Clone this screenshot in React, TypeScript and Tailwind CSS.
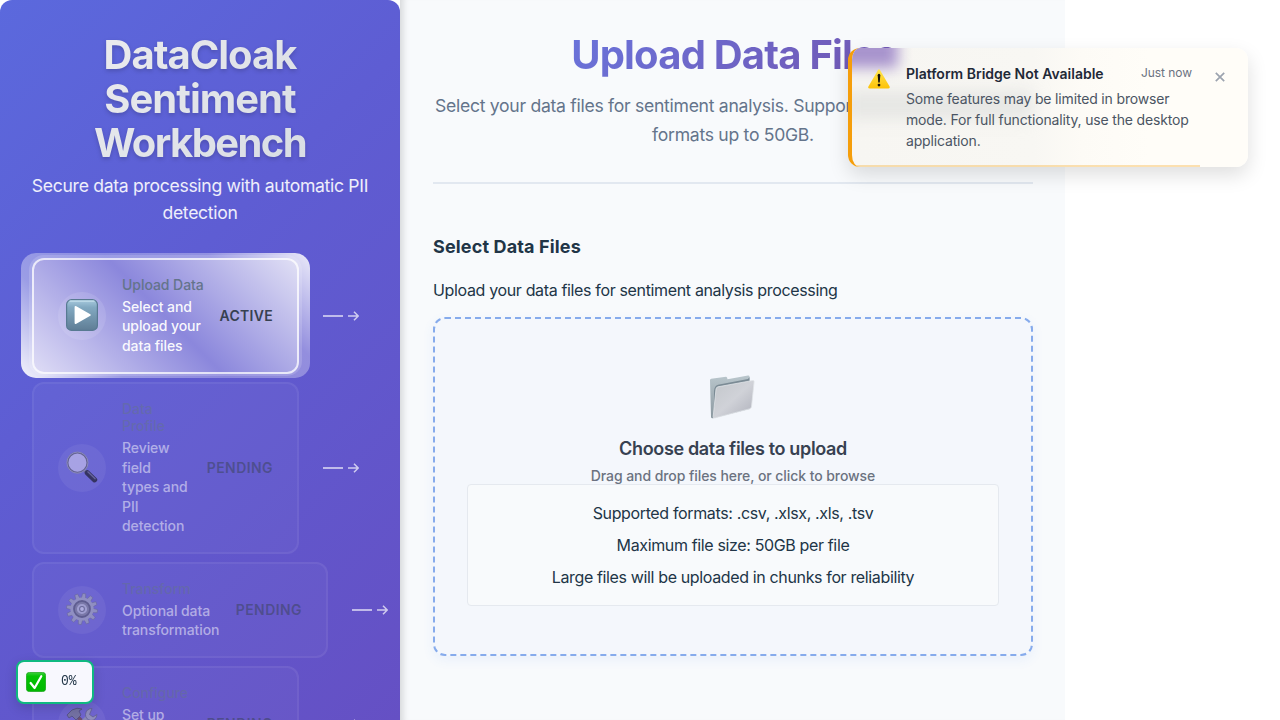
import React from 'react';

const PlayIcon = () => (
  <svg width="32" height="32" viewBox="0 0 32 32" className="block">
    <defs>
      <linearGradient id="play" x1="0" y1="0" x2="0" y2="1">
        <stop offset="0" stopColor="#a9cbdf" />
        <stop offset="0.25" stopColor="#82a9c1" />
        <stop offset="1" stopColor="#5f7d95" />
      </linearGradient>
    </defs>
    <rect x="0.6" y="0.6" width="30.8" height="30.8" rx="5" fill="url(#play)" stroke="#587a92" strokeWidth="1.2" />
    <path d="M4 2.2h24" stroke="#c4dfec" strokeWidth="1.2" strokeLinecap="round" />
    <path d="M8.6 8.2q0-1.800 1.700-1l14 8q1.300.8 0 1.600l-14 8q-1.700.8-1.700-1z" fill="#fff" />
  </svg>
);

const SearchIcon = () => (
  <svg width="32" height="32" viewBox="0 0 33 33" className="block">
    <path d="M19 20l4 4" stroke="#777" strokeWidth="3" />
    <path d="M22 22.500l7.500 7.200" stroke="#111118" strokeWidth="5.400" strokeLinecap="round" />
    <path d="M22.500 21.500l7.500 7.200" stroke="#62627a" strokeWidth="1.400" strokeLinecap="round" />
    <circle cx="11.800" cy="12" r="10.200" fill="#cfc9f0" stroke="#5d5d68" strokeWidth="1.800" />
    <circle cx="11.800" cy="12" r="10.900" fill="none" stroke="#aeb0c0" strokeWidth="0.800" />
  </svg>
);

const teeth = [0, 30, 60, 90, 120, 150, 180, 210, 240, 270, 300, 330];

const GearIcon = () => (
  <svg width="32" height="32" viewBox="0 0 32 32" className="block">
    {teeth.map((a) => (
      <path key={a} d="M13.800 5.500l.7-5h3l.7 5z" fill="#a6a9b8" stroke="#62646f" strokeWidth="0.500" transform={`rotate(${a + 8} 16 16)`} />
    ))}
    <circle cx="16" cy="16" r="11.600" fill="#a8abba" />
    <circle cx="16" cy="16" r="8" fill="#83858f" stroke="#555766" strokeWidth="1.800" />
    <circle cx="16" cy="16" r="4" fill="#666975" stroke="#c0c3d0" strokeWidth="2.200" />
    <circle cx="16" cy="16" r="1.900" fill="#dcdeea" />
  </svg>
);

const ToolsIcon = () => (
  <svg width="32" height="32" viewBox="0 0 32 32" className="block">
    <path d="M11 9l17 19" stroke="#6d4330" strokeWidth="4" strokeLinecap="round" />
    <path d="M1 8l5-5q5-3 10-1l-3 2 2 4-5 5-4-4-3 2z" fill="#787b86" stroke="#3d3f4a" strokeWidth="0.8" />
    <path d="M4 28L22 10" stroke="#9a9da8" strokeWidth="4.4" strokeLinecap="round" />
    <path d="M26 1.500q-6 0-6.500 6 0 5 5.500 6 5 0 6-6l-4 2.500-3.500-2.500z" fill="#a6a9b4" stroke="#5b5d69" strokeWidth="0.8" />
  </svg>
);

const CheckIcon = () => (
  <svg width="20" height="20" viewBox="0 0 20 20" className="block">
    <defs>
      <linearGradient id="chk" x1="0" y1="0" x2="0" y2="1">
        <stop offset="0" stopColor="#3fcf3f" />
        <stop offset="0.2" stopColor="#04c304" />
        <stop offset="1" stopColor="#02b802" />
      </linearGradient>
    </defs>
    <rect x="0.400" y="0.400" width="19.200" height="19.200" rx="3" fill="url(#chk)" stroke="#16a416" strokeWidth="0.800" />
    <path d="M4.600 11l4 5L15.300 4.200" fill="none" stroke="#fff" strokeWidth="2.200" strokeLinecap="round" strokeLinejoin="round" />
  </svg>
);

const WarningIcon = () => (
  <svg width="24" height="22" viewBox="0 0 24 22" className="block">
    <defs>
      <linearGradient id="warn" x1="0" y1="0" x2="0" y2="1">
        <stop offset="0" stopColor="#ffe650" />
        <stop offset="1" stopColor="#fdc208" />
      </linearGradient>
    </defs>
    <path d="M10.900 2.200q1.100-1.700 2.200 0l9.500 16.300q.8 1.900-1.200 1.900H2.600q-2 0-1.200-1.900z" fill="url(#warn)" />
    <path d="M10.700 7.300q0-1.500 1.300-1.500t1.300 1.500l-.5 6.500q-.1.900-.8.900t-.8-.9z" fill="#15120a" />
    <circle cx="12" cy="17.100" r="1.400" fill="#15120a" />
  </svg>
);

const FolderIcon = () => (
  <svg width="48" height="48" viewBox="0 0 48 48" className="block">
    <defs>
      <linearGradient id="fb" x1="0" y1="0" x2="0" y2="1">
        <stop offset="0" stopColor="#b9c6cc" />
        <stop offset="1" stopColor="#8a979f" />
      </linearGradient>
      <linearGradient id="ff" x1="0" y1="0" x2="1" y2="1">
        <stop offset="0" stopColor="#c3c7cb" />
        <stop offset="0.5" stopColor="#d0d2d8" />
        <stop offset="1" stopColor="#aeb0ba" />
      </linearGradient>
    </defs>
    <path d="M1 7.200q0-1.200 1.200-1.400L17 3.800q1.300-.1 1.500 2.500L39 2.600q1.500-.2 1.500 1V36L4 45.300q-2 .3-2-1.500z" fill="url(#fb)" />
    <path d="M5 18q.5-5.500 4-6.200L39 6l1.500-2v8L5 43z" fill="#7b8b95" />
    <path d="M7 16q.3-1.800 2-2.200L43.700 7.500q1.600-.2 1.400 1.300l-2.600 25q-.2 1.600-1.800 2L5.500 45q-1.500.2-1.300-1.300z" fill="url(#ff)" stroke="#e1e4e8" strokeWidth="0.800" />
  </svg>
);

const Arrow = () => (
  <div className="ml-[24px] flex w-[37px] shrink-0 items-center text-white/70">
    <div className="h-[2px] w-[20px] bg-white/60" />
    <svg width="11" height="10" viewBox="0 0 11 10" className="ml-[5px] block" fill="none" stroke="currentColor" strokeWidth="1.500">
      <path d="M0 5h10M6 .8L10.200 5 6 9.200" />
    </svg>
  </div>
);

type StageTextProps = {
  title: string[];
  lines: string[];
  titleClass: string;
  lineClass: string;
};

const StageText = ({ title, lines, titleClass, lineClass }: StageTextProps) => (
  <div className="ml-[16px] flex-1 whitespace-nowrap text-[14px] font-medium">
    <div className={`leading-[17.500px] tracking-[-0.05px] ${titleClass}`}>
      {title.map((t) => <div key={t}>{t}</div>)}
    </div>
    <div className={`mt-[3.500px] mb-[0.500px] leading-[19.600px] tracking-[-0.080px] ${lineClass}`}>
      {lines.map((t) => <div key={t}>{t}</div>)}
    </div>
  </div>
);

type StageProps = {
  title: string[];
  lines: string[];
  icon: React.ReactNode;
  size: string;
};

const PendingStage = ({ title, lines, icon, size }: StageProps) => (
  <div className="flex items-center">
    <div className={`flex shrink-0 items-center rounded-[12px] border-2 border-white/[0.06] bg-white/[0.03] px-[24px] ${size}`}>
      <div className="flex size-[48px] shrink-0 items-center justify-center rounded-full bg-white/[0.06] pb-[2px]">
        <div className="opacity-60">{icon}</div>
      </div>
      <StageText title={title} lines={lines} titleClass="text-[#64748b]/50" lineClass="text-white/50" />
      <div className="pb-px text-[14px] font-semibold tracking-[0.430px] text-[#374151]/50">PENDING</div>
    </div>
    <Arrow />
  </div>
);

const ActiveStage = () => (
  <div className="flex items-center">
    <div className="relative h-[116px] w-[267px] shrink-0">
      <div className="absolute -top-[5px] -left-[11px] h-[125px] w-[289px] rounded-[15px] bg-[linear-gradient(45deg,rgba(255,255,255,0.93)_0%,rgba(255,255,255,0.38)_25%,rgba(255,255,255,0.28)_50%,rgba(255,255,255,0.32)_75%,rgba(255,255,255,0.88)_100%)]" />
      <div className="absolute -top-[3px] -left-[3px] h-[121px] w-[273px] rounded-[15px] bg-white/15" />
      <div className="relative flex h-full items-center rounded-[12px] border-2 border-white/75 bg-[linear-gradient(45deg,#e0def6_0%,#8b87dc_50%,#e2e1f5_100%)] bg-origin-border px-[24px]">
        <div className="flex size-[48px] shrink-0 items-center justify-center rounded-full bg-white/10 pb-[2px]"><PlayIcon /></div>
        <StageText title={['Upload Data']} lines={['Select and', 'upload your', 'data files']} titleClass="text-[#64748b]" lineClass="text-white/95" />
        <div className="pb-px text-[14px] font-semibold tracking-[0.300px] text-[#374151]">ACTIVE</div>
      </div>
    </div>
    <Arrow />
  </div>
);

const Sidebar = () => (
  <aside className="relative z-10 h-[720px] w-[400px] shrink-0 overflow-hidden rounded-t-[12px] bg-[linear-gradient(135deg,#5b69dd_0%,#5e5dd3_40%,#6550c4_100%)] px-[32px] pt-[33px]">
    <h1 className="bg-[linear-gradient(135deg,#eeeef0,#d5dae2)] bg-clip-text text-center text-[40px] leading-[44px] font-bold tracking-[-1px] text-transparent drop-shadow-[0_2px_2px_rgba(0,0,0,0.18)]">
      DataCloak<br />Sentiment<br /><span className="tracking-[-1.600px]">Workbench</span>
    </h1>
    <p className="-mx-[16px] mt-[7px] text-center text-[17.600px] leading-[27px] tracking-[-0.310px] text-white/90">
      Secure data processing with automatic PII<br />detection
    </p>
    <div className="mt-[32px] flex flex-col gap-[8px]">
      <ActiveStage />
      <PendingStage title={['Data', 'Profile']} lines={['Review', 'field', 'types and', 'PII', 'detection']} icon={<SearchIcon />} size="h-[172px] w-[267px]" />
      <PendingStage title={['Transform']} lines={['Optional data', 'transformation']} icon={<GearIcon />} size="h-[96px] w-[296px]" />
      <PendingStage title={['Configure']} lines={['Set up', 'sentiment', 'analysis']} icon={<ToolsIcon />} size="h-[116px] w-[267px]" />
    </div>
  </aside>
);

const Toast = () => (
  <div className="absolute top-[48px] left-[848px] z-20 flex h-[119px] w-[400px] overflow-hidden rounded-[12px] border-l-4 border-[#f59e0b] bg-[linear-gradient(90deg,#f7f6f2_0%,#f8f7f3_46%,#fdfbf6_58%,#fffdf8_75%)] pt-[16px] pr-[20px] pl-[15px] shadow-[0_8px_20px_rgba(0,0,0,0.13)]">
    <div className="absolute -top-[14px] -left-[16px] h-[34px] w-[62px] bg-[#a894cd] blur-[7px]" />
    <div className="absolute top-[44px] -left-[10px] h-[26px] w-[190px] bg-[#d9dad9]/60 blur-[9px]" />
    <div className="relative mt-[4px] w-[24px] shrink-0"><WarningIcon /></div>
    <div className="relative ml-[15px] w-[286px] shrink-0">
      <div className="flex justify-between">
        <div className="text-[14px] leading-[20px] font-semibold text-[#1f2937]">Platform Bridge Not Available</div>
        <div className="text-[12px] leading-[17px] tracking-[-0.050px] text-[#6b7280]">Just now</div>
      </div>
      <p className="mt-[4px] whitespace-nowrap text-[14px] leading-[21px] tracking-[-0.160px] text-[#4b5563]">
        Some features may be limited in browser<br />mode. For full functionality, use the desktop<br />application.
      </p>
    </div>
    <svg width="10" height="10" viewBox="0 0 10 10" className="mt-[8px] ml-[23px] shrink-0" stroke="#9ca3af" strokeWidth="1.700">
      <path d="M.8.8l8.400 8.400M9.200.8L.8 9.200" />
    </svg>
    <div className="absolute bottom-0 left-0 h-[2px] w-[348px] bg-[#f59e0b]/30" />
  </div>
);

export default function App() {
  return (
    <div className="relative flex h-[720px] w-[1280px] overflow-hidden bg-white font-['Inter',sans-serif] text-[#213547]">
      <Sidebar />
      <main className="w-[665px] shrink-0 bg-[#f8fafc] pt-[32px] pr-[32px] pl-[33px] shadow-[inset_9px_0_7px_-6px_rgba(0,0,0,0.14)]">
        <header className="h-[152px] border-b-2 border-[#e2e8f0] text-center">
          <h2 className="whitespace-nowrap bg-[linear-gradient(135deg,#667eea,#764ba2)] bg-clip-text pl-[2px] text-[40px] leading-[46px] font-bold tracking-[-0.800px] text-transparent">Upload Data Files</h2>
          <p className="mt-[13px] whitespace-nowrap text-[17.600px] leading-[29px] tracking-[-0.290px] text-[#64748b]">
            <span className="block pl-[2px] text-left">Select your data files for sentiment analysis. Supports CSV, Excel, and TSV</span>
            <span className="block">formats up to 50GB.</span>
          </p>
        </header>
        <h3 className="mt-[49px] text-[18px] leading-[27px] font-bold tracking-[0.140px]">Select Data Files</h3>
        <p className="mt-[18px] text-[16px] leading-[24px] tracking-[-0.350px]">Upload your data files for sentiment analysis processing</p>
        <div className="mt-[15px] flex h-[339px] flex-col items-center rounded-[12px] border-2 border-dashed border-[#86abec] bg-[#f4f7fc] px-[32px] pt-[54px] shadow-[0_4px_12px_rgba(59,130,246,0.08)]">
          <FolderIcon />
          <div className="mt-[14px] text-[18px] leading-[27px] font-semibold tracking-[-0.340px] text-[#374151]">Choose data files to upload</div>
          <div className="mt-[3px] text-[14px] leading-[21px] font-medium tracking-[-0.070px] text-[#6b7280]">Drag and drop files here, or click to browse</div>
          <div className="-mt-[2px] flex h-[122px] w-full flex-col items-center justify-center rounded-[4px] border border-[#e5e9ef] bg-[#f8fafc] text-[16px] leading-[32px] tracking-[-0.360px]">
            <p>Supported formats: .csv, .xlsx, .xls, .tsv</p>
            <p>Maximum file size: 50GB per file</p>
            <p>Large files will be uploaded in chunks for reliability</p>
          </div>
        </div>
      </main>
      <Toast />
      <div className="absolute top-[660px] left-[16px] z-20 flex h-[44px] w-[78px] items-center rounded-[8px] border-2 border-[#10b981] bg-[#f8f8fe] pl-[8px] shadow-[0_4px_12px_rgba(0,0,0,0.15)]">
        <CheckIcon />
        <span className="ml-[15px] inline-block scale-y-115 font-['Liberation_Mono',monospace] text-[13px] tracking-[-0.100px]">0%</span>
      </div>
    </div>
  );
}
